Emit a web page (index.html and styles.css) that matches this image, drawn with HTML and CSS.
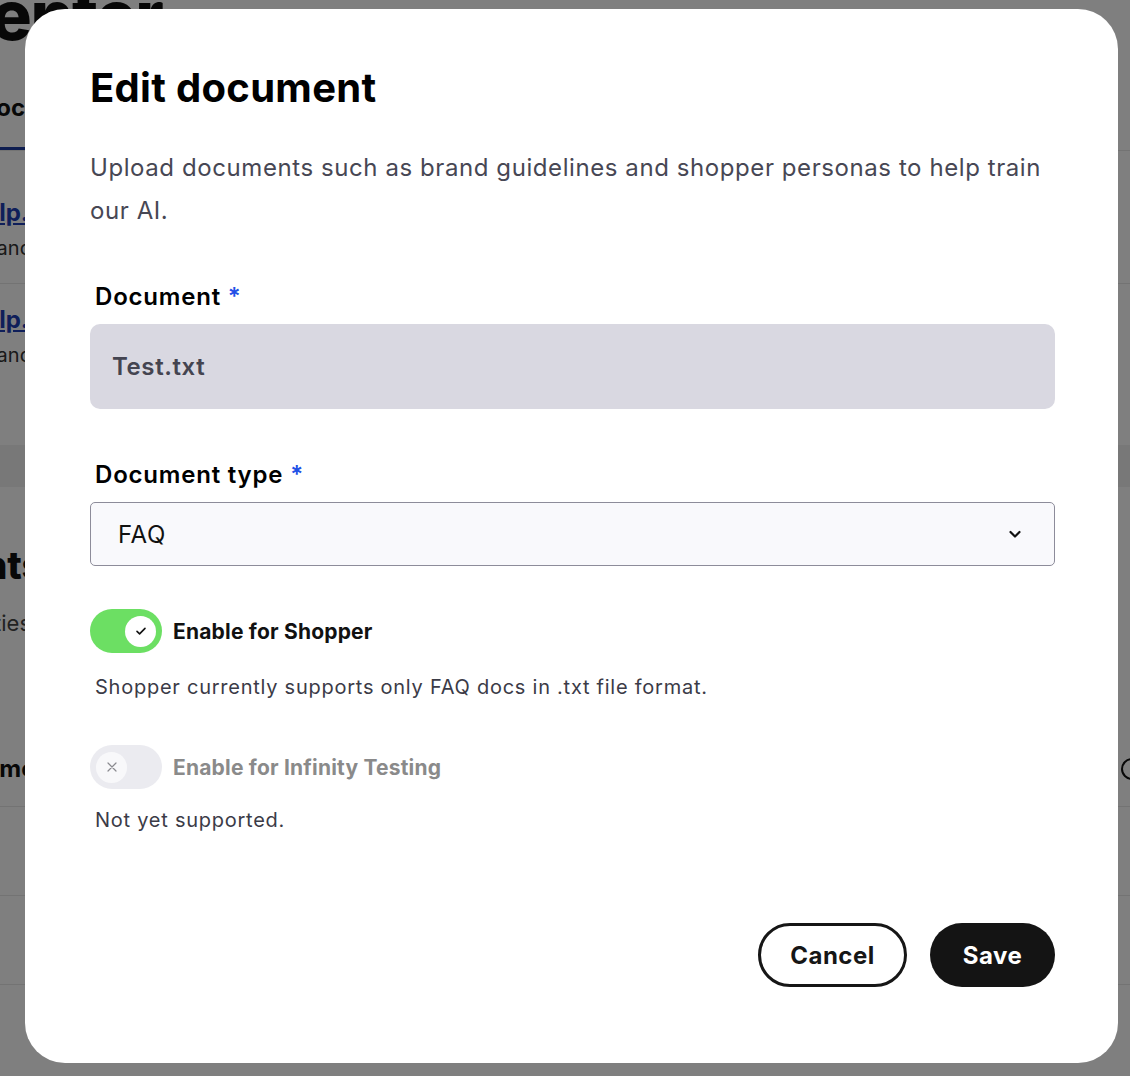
FILE: index.html
```html
<!DOCTYPE html>
<html lang="en">
<head>
    <meta charset="UTF-8">
    <meta name="viewport" content="width=device-width, initial-scale=1.0">
    <title>Edit document - Content Center</title>
    <link rel="stylesheet" href="styles.css">
</head>
<body>
    <div class="page">
        <h1 class="page-title">Center</h1>

        <div class="tabs">
            <span class="tab tab-active">Documents</span>
        </div>

        <ul class="doc-list">
            <li class="doc-row">
                <a href="#" class="doc-link">help.txt</a>
                <span class="doc-meta">Brand guidelines</span>
            </li>
            <li class="doc-row">
                <a href="#" class="doc-link">help.txt</a>
                <span class="doc-meta">Brand personas</span>
            </li>
        </ul>

        <div class="band"></div>

        <section class="agents">
            <h2 class="agents-title">Agents</h2>
            <p class="agents-sub">Properties</p>

            <div class="table-head">
                <span class="col-name">Name</span>
                <span class="info-icon"></span>
            </div>
            <div class="table-row"></div>
            <div class="table-row"></div>
        </section>
    </div>

    <div class="overlay">
        <div class="modal" role="dialog" aria-labelledby="modalTitle">
            <h2 class="modal-title" id="modalTitle">Edit document</h2>
            <p class="modal-desc">Upload documents such as brand guidelines and shopper personas to help train our AI.</p>

            <div class="field">
                <label class="field-label">Document <span class="required">*</span></label>
                <div class="file-input">Test.txt</div>
            </div>

            <div class="field field-type">
                <label class="field-label">Document type <span class="required">*</span></label>
                <div class="select">
                    <span>FAQ</span>
                    <svg class="chevron" width="16" height="16" viewBox="0 0 16 16" fill="none">
                        <path d="M3.5 6l4.5 4.5L12.5 6" stroke="#111" stroke-width="2.2" stroke-linecap="round" stroke-linejoin="round"/>
                    </svg>
                </div>
            </div>

            <div class="toggle-row">
                <span class="toggle toggle-on">
                    <span class="knob">
                        <svg width="14" height="14" viewBox="0 0 14 14" fill="none">
                            <path d="M3 7.4l2.6 2.5L11 4.4" stroke="#111" stroke-width="1.6" stroke-linecap="round" stroke-linejoin="round"/>
                        </svg>
                    </span>
                </span>
                <span class="toggle-label">Enable for Shopper</span>
            </div>
            <p class="helper">Shopper currently supports only FAQ docs in .txt file format.</p>

            <div class="toggle-row toggle-row-disabled">
                <span class="toggle toggle-off">
                    <span class="knob">
                        <svg width="14" height="14" viewBox="0 0 14 14" fill="none">
                            <path d="M3 3l8 8M11 3l-8 8" stroke="#8a8a8f" stroke-width="1.2" stroke-linecap="round"/>
                        </svg>
                    </span>
                </span>
                <span class="toggle-label">Enable for Infinity Testing</span>
            </div>
            <p class="helper helper-small-gap">Not yet supported.</p>

            <div class="button-group">
                <button type="button" class="btn btn-secondary">Cancel</button>
                <button type="button" class="btn btn-primary">Save</button>
            </div>
        </div>
    </div>
</body>
</html>
```

FILE: styles.css
```css
html, body {
    height: 100%;
}

body {
    font-family: Inter, "Noto Sans", sans-serif;
    background-color: #ffffff;
    color: #111;
    margin: 0;
    overflow: hidden;
}

/* page behind the dialog */

.page {
    position: relative;
}

.page-title {
    margin: -19px 0 0 -58px;
    font-size: 68px;
    line-height: 68px;
    font-weight: 800;
    letter-spacing: -1.5px;
}

.tabs {
    margin-top: 44px;
    border-bottom: 1px solid #e6e6e6;
}

.tab {
    display: inline-block;
    margin-left: -21px;
    padding: 0 0 24px 0;
    font-size: 24px;
    line-height: 30px;
    font-weight: 700;
}

.tab-active {
    border-bottom: 3px solid #1c3ba0;
    padding-right: 60px;
}

.doc-list {
    list-style: none;
    margin: 0;
    padding: 0;
}

.doc-row {
    display: flex;
    flex-direction: column;
    gap: 8px;
    padding: 48px 0 22px;
    border-bottom: 1px solid #e6e6e6;
}

.doc-row + .doc-row {
    padding-top: 22px;
    border-bottom: none;
}

.doc-link {
    margin-left: -30px;
    font-size: 24px;
    line-height: 28px;
    font-weight: 700;
    color: #1f3fb4;
}

.doc-meta {
    margin-left: -24px;
    font-size: 20px;
    line-height: 26px;
    color: #333;
}

.band {
    margin-top: 55px;
    height: 42px;
    background: #f0f0f0;
}

.agents-title {
    margin: 56px 0 0 -92px;
    font-size: 38px;
    line-height: 44px;
    font-weight: 800;
}

.agents-sub {
    margin: 21px 0 0 -76px;
    font-size: 22px;
    line-height: 30px;
    color: #444;
}

.table-head {
    display: flex;
    justify-content: space-between;
    align-items: center;
    margin-top: 116px;
    padding-bottom: 22px;
    border-bottom: 1px solid #e6e6e6;
}

.col-name {
    margin-left: -33px;
    font-size: 24px;
    line-height: 30px;
    font-weight: 700;
}

.info-icon {
    width: 18px;
    height: 18px;
    margin-right: -13px;
    border: 2px solid #111;
    border-radius: 50%;
}

.table-row {
    height: 88px;
    border-bottom: 1px solid #e6e6e6;
}

/* dialog */

.overlay {
    position: fixed;
    inset: 0;
    display: flex;
    padding: 9px 12px 13px 25px;
    background: rgba(0, 0, 0, 0.5);
}

.modal {
    flex: 1;
    display: flex;
    flex-direction: column;
    padding: 55px 63px 0 65px;
    background: white;
    border-radius: 40px;
}

.modal-title {
    margin: 0;
    font-size: 40px;
    line-height: 48px;
    font-weight: 700;
    letter-spacing: 0.3px;
    color: #000;
}

.modal-desc {
    margin: 34px 0 0;
    font-size: 24px;
    line-height: 43px;
    letter-spacing: 0.58px;
    color: #474754;
}

.field {
    margin-top: 50px;
}

.field-type {
    margin-top: 51px;
}

.field-label {
    display: block;
    margin: 0 0 12px 5px;
    font-size: 24px;
    line-height: 30px;
    font-weight: 600;
    letter-spacing: 0.8px;
    color: #000;
}

.required {
    color: #2250e6;
}

.file-input {
    display: flex;
    align-items: center;
    height: 85px;
    padding-left: 22px;
    background: #d9d8e1;
    border-radius: 10px;
    font-size: 24px;
    font-weight: 600;
    letter-spacing: 0.6px;
    color: #444450;
    box-sizing: border-box;
}

.select {
    display: flex;
    align-items: center;
    justify-content: space-between;
    height: 64px;
    padding: 0 31px 0 27px;
    background: #f9f9fc;
    border: 1px solid #8d8c9a;
    border-radius: 5px;
    font-size: 24px;
    letter-spacing: 0.6px;
    color: #111;
    box-sizing: border-box;
}

.toggle-row {
    display: flex;
    align-items: center;
    gap: 11px;
    margin-top: 43px;
}

.toggle {
    display: flex;
    align-items: center;
    width: 72px;
    height: 44px;
    padding: 0 6px;
    border-radius: 22px;
    box-sizing: border-box;
}

.toggle-on {
    background: #6cdf63;
    justify-content: flex-end;
}

.toggle-off {
    background: #ebebf0;
    justify-content: flex-start;
}

.knob {
    display: flex;
    align-items: center;
    justify-content: center;
    width: 31px;
    height: 31px;
    border-radius: 50%;
    background: white;
}

.toggle-off .knob {
    background: #f8f8fa;
}

.toggle-label {
    font-size: 21px;
    font-weight: 700;
    letter-spacing: 0.2px;
    color: #111;
}

.toggle-row-disabled {
    margin-top: 44px;
}

.toggle-row-disabled .toggle-label {
    color: #8a8a8a;
}

.helper {
    margin: 20px 0 0 5px;
    font-size: 20px;
    line-height: 28px;
    letter-spacing: 0.75px;
    color: #3b3b47;
}

.helper-small-gap {
    margin-top: 17px;
}

.button-group {
    display: flex;
    gap: 23px;
    justify-content: flex-end;
    margin-top: 89px;
}

.btn {
    height: 64px;
    border-radius: 32px;
    font-family: inherit;
    font-size: 24px;
    font-weight: 700;
    letter-spacing: 0.5px;
    cursor: pointer;
}

.btn-secondary {
    width: 149px;
    background: white;
    color: #161616;
    border: 3px solid #161616;
}

.btn-primary {
    width: 125px;
    background: #141414;
    color: white;
    border: none;
}
```
